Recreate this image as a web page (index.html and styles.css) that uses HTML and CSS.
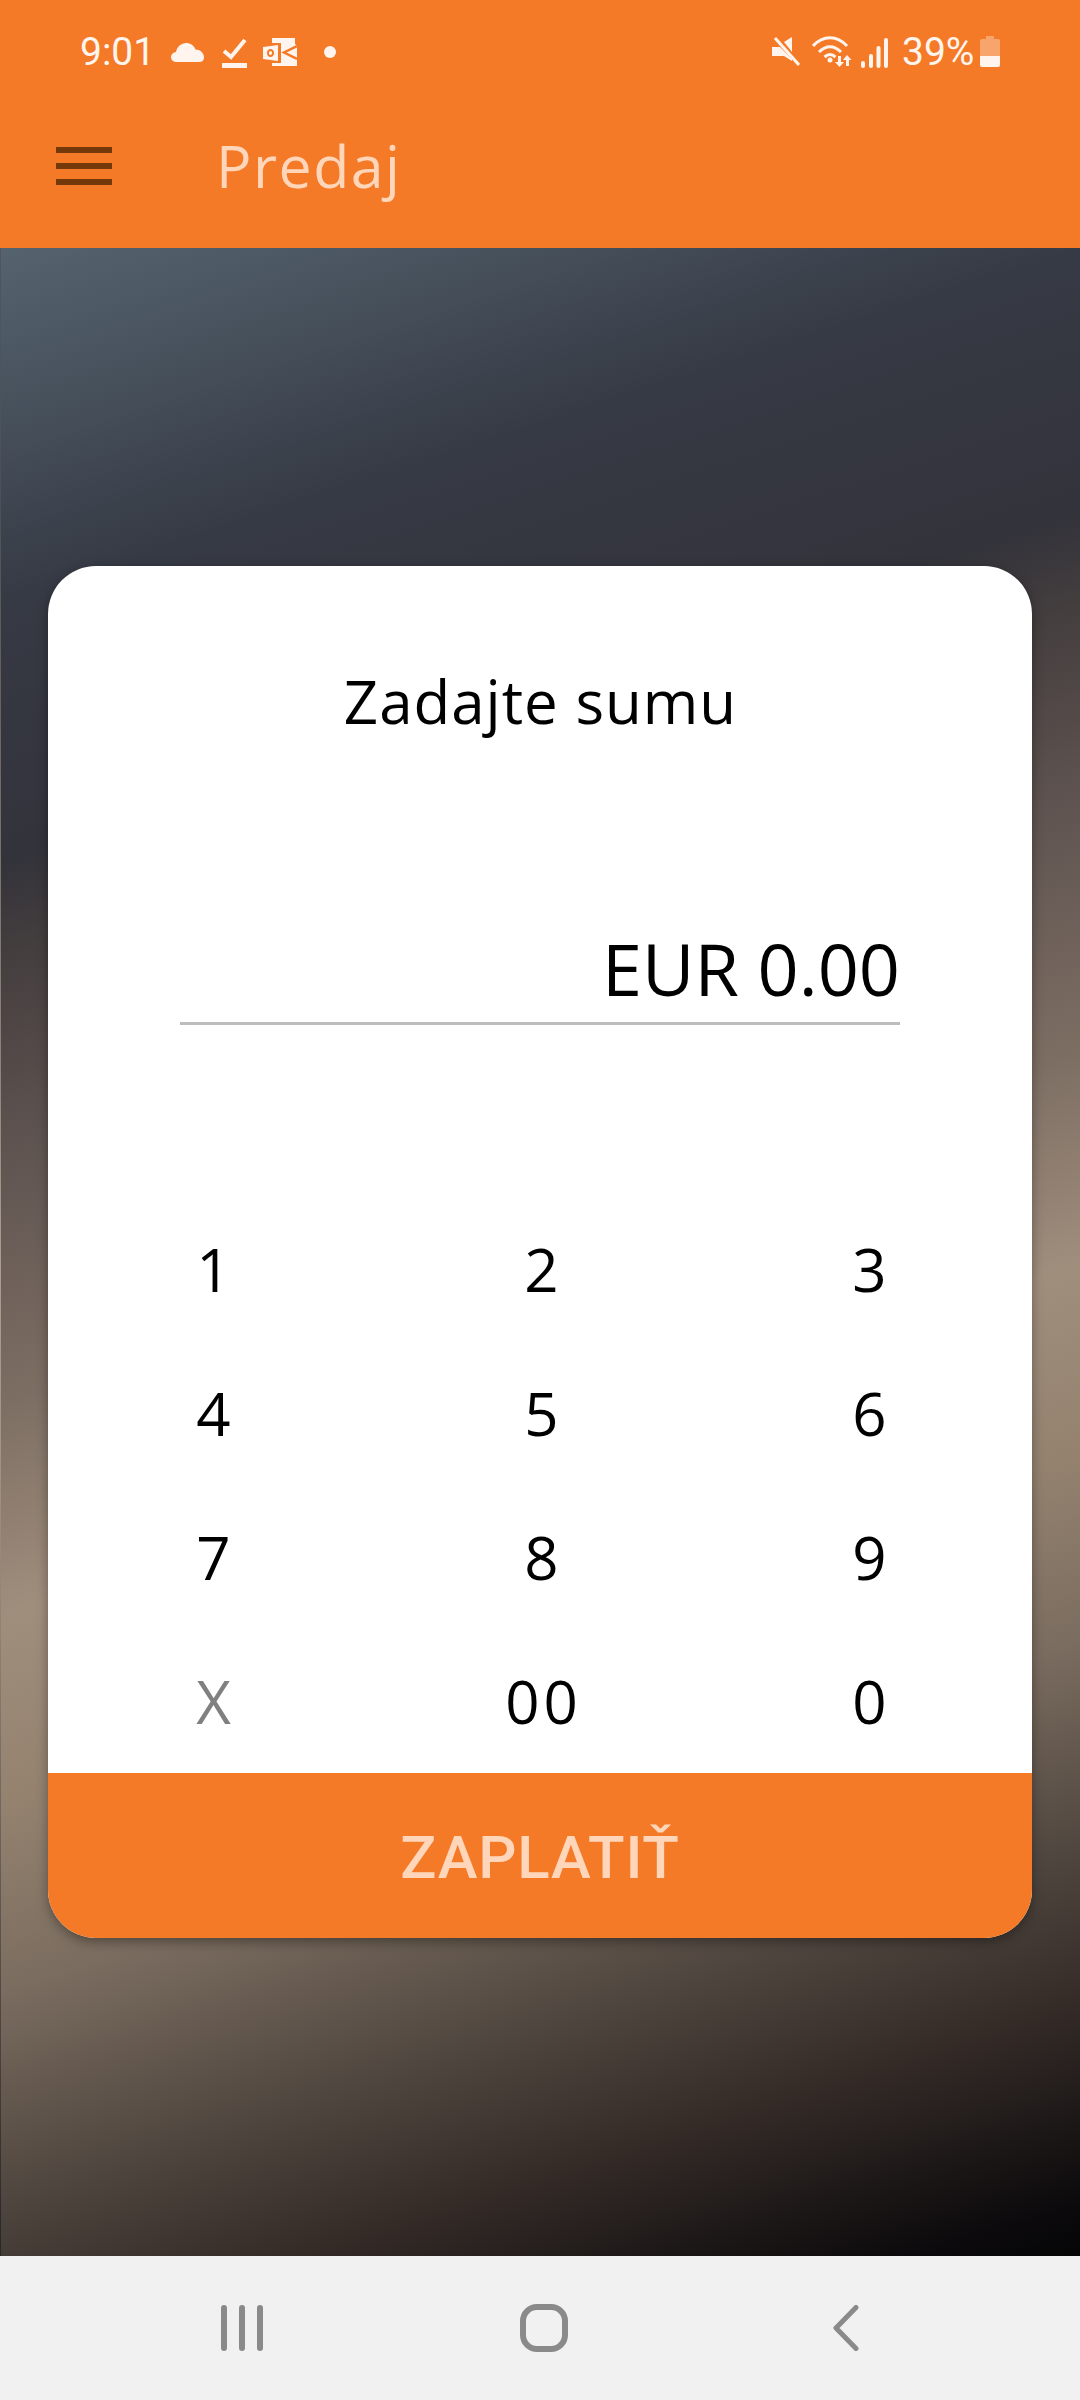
FILE: index.html
```html
<!DOCTYPE html>
<html lang="sk">
<head>
<meta charset="utf-8">
<title>Predaj</title>
<link rel="stylesheet" href="styles.css">
</head>
<body>
<div class="screen">
  <header class="appbar">
    <div class="status">
      <span class="time">9:01</span>
      <svg class="i-cloud" viewBox="0 0 33 19"><path d="M6 19C2.500 19 0 17 0 14c0-2.600 2-4.600 5-5C6 3.500 10.500 0 15 0c4.500 0 8 2.500 9.500 6.500 4.500 0 8.500 3.500 8.500 8 0 3-2 4.500-5 4.500z"/></svg>
      <svg class="i-check" viewBox="0 0 25 30"><path class="sq" d="M2 13l7 6L23 2" fill="none" stroke-width="4"/><rect y="25" width="25" height="5"/></svg>
      <svg class="i-outlook" viewBox="0 0 34 28"><path d="M9 0h23v6l2 2v20H9v-3h9V5H9z"/><path class="notch" d="M34 8l-13 6.500L34 21" fill="none" stroke-width="2.500"/><path fill-rule="evenodd" d="M0 9l15-2v16L0 21zM4 15c0 2.500 1.500 4 3.500 4s3.500-1.500 3.500-4-1.500-4-3.500-4S4 12.500 4 15zM6 15c0-1.300.6-2 1.500-2S9 13.700 9 15s-.6 2-1.500 2S6 16.300 6 15z"/></svg>
      <span class="dot"></span>
      <span class="spacer"></span>
      <svg class="i-mute" viewBox="0 0 28 30"><path d="M0 10h6l2 0 12 12v2L12 19H0zM12 5l8-5v15z"/><path class="sq" d="M3 1l24 27" fill="none" stroke-width="3"/></svg>
      <svg class="i-wifi" viewBox="0 0 43 32"><g fill="none" stroke-width="3"><path d="M1 11C11 0 25 0 35 11"/><path d="M7 17c7-7 15-7 22 0"/><path d="M12.500 22c4-3.500 7-3.500 11 0"/></g><circle cx="18" cy="25" r="2.500"/><path d="M26 21h3v6h3l-4.500 5-4.500-5h3zM35 20l4.500 5H37v6h-3v-6h-3z"/></svg>
      <svg class="i-signal" viewBox="0 0 27 30"><rect x="0" y="23" width="4" height="7" rx="2"/><rect x="8" y="16" width="4" height="14" rx="2"/><rect x="15.500" y="8" width="4" height="22" rx="2"/><rect x="23" y="0" width="4" height="30" rx="2"/></svg>
      <span class="pct">39%</span>
      <svg class="i-batt" viewBox="0 0 20 31"><path class="batt-empty" d="M6 0h8v3h4a2 2 0 0 1 2 2v15H0V5a2 2 0 0 1 2-2h4z"/><path d="M0 20h20v9a2 2 0 0 1-2 2H2a2 2 0 0 1-2-2z"/></svg>
    </div>
    <div class="toolbar">
      <div class="burger"><i></i><i></i><i></i></div>
      <h1 class="title">Predaj</h1>
    </div>
  </header>

  <main class="stage">
    <section class="card">
      <h2 class="prompt">Zadajte sumu</h2>
      <div class="amount">EUR 0.00</div>
      <div class="keypad">
        <button class="key">1</button>
        <button class="key">2</button>
        <button class="key">3</button>
        <button class="key">4</button>
        <button class="key">5</button>
        <button class="key">6</button>
        <button class="key">7</button>
        <button class="key">8</button>
        <button class="key">9</button>
        <button class="key key-muted">X</button>
        <button class="key">00</button>
        <button class="key">0</button>
      </div>
      <button class="pay">ZAPLATIŤ</button>
    </section>
  </main>

  <nav class="navbar">
    <svg class="n-recent" viewBox="0 0 42 46"><rect x="0" y="0" width="6" height="46" rx="3"/><rect x="18" y="0" width="6" height="46" rx="3"/><rect x="36" y="0" width="6" height="46" rx="3"/></svg>
    <svg class="n-home" viewBox="0 0 48 48"><rect x="3" y="3" width="42" height="42" rx="14" fill="none" stroke-width="6"/></svg>
    <svg class="n-back" viewBox="0 0 26 46"><path d="M23 2.500L3 23l20 20.500" fill="none" stroke-width="5" stroke-linecap="round" stroke-linejoin="round"/></svg>
  </nav>
</div>
</body>
</html>
```
FILE: styles.css
```css
* { box-sizing: border-box; }
html, body { margin: 0; padding: 0; }
body { width: 1080px; height: 2400px; overflow: hidden; font-family: "Open Sans", "Noto Sans", sans-serif; }
.screen { width: 1080px; height: 2400px; display: flex; flex-direction: column; }

.appbar { height: 248px; background: #f57a28; flex: none; display: flex; flex-direction: column; }
.status { height: 100px; padding: 5px 80px 0; display: flex; align-items: center; color: #fff5ee; fill: #fff5ee; stroke: #fff5ee; }
.status svg { display: block; flex: none; stroke: none; }
.status .sq { stroke: #fff5ee; }
.status .notch { stroke: #f57a28; }
.status .i-wifi g { stroke: #fff5ee; }
.time { font: 400 39px/1 Roboto, sans-serif; width: 66px; }
.i-cloud { width: 33px; height: 19px; margin-left: 25px; margin-top: 0; }
.i-check { width: 25px; height: 30px; margin-left: 18px; margin-top: 0; }
.i-outlook { width: 34px; height: 28px; margin-left: 16px; margin-top: -2px; }
.dot { width: 12px; height: 12px; border-radius: 50%; background: #fff5ee; margin-left: 27px; margin-top: -2px; }
.spacer { flex: 1; }
.i-mute { width: 28px; height: 30px; margin-top: -2px; }
.i-wifi { width: 43px; height: 32px; margin-left: 12px; margin-top: -4px; }
.i-signal { width: 27px; height: 30px; margin-left: 6px; margin-top: 0; }
.pct { font: 400 39px/1 Roboto, sans-serif; margin-left: 14px; width: 71px; }
.i-batt { width: 20px; height: 31px; margin-left: 7px; margin-top: -3px; }
.batt-empty { opacity: .35; }

.toolbar { flex: 1; display: flex; align-items: center; padding-left: 56px; padding-bottom: 16px; }
.burger { width: 56px; height: 38px; display: flex; flex-direction: column; justify-content: space-between; }
.burger i { display: block; height: 6px; background: #73390a; }
.title { margin: -3px 0 0 104px; font-weight: 400; font-size: 59px; line-height: 80px; letter-spacing: 1.500px; color: #ffd6ba; }

.stage { flex: 1; min-height: 0; display: flex; align-items: center; padding: 0 48px 0 47px; border-left: 1px solid rgba(255,255,255,.14);
  background: linear-gradient(162deg, #55636f 0%, #46505b 7.400%, #363a44 15%, #33333b 26%, #443e3e 30%, #5e5350 38%, #7d6e63 49%, #a08e7d 58%, #94826f 66%, #7a6c5f 74%, #4e453e 83%, #352c28 89%, #0c0a0c 97.700%, #050506 100%); }
.card { width: 984px; height: 1372px; background: #fff; border-radius: 48px; overflow: hidden; display: flex; flex-direction: column;
  box-shadow: 0 4px 12px rgba(0,0,0,.35); }
.prompt { flex: none; margin: 0; padding: 98px 0 0 1px; font-weight: 400; font-size: 60px; line-height: 74px; text-align: center; color: #000; letter-spacing: 1px; }
.amount { flex: none; margin: 175px 132px 0; height: 112px; border-bottom: 3px solid #bdbdbd; text-align: right; padding: 18px 0 0 0;
  font-size: 72px; line-height: 74px; color: #000; }
.keypad { flex: none; margin-top: 172px; display: grid; grid-template-columns: repeat(3, 328px); grid-auto-rows: 144px; }
.key { appearance: none; border: 0; background: none; padding: 0 0 0 7px; font: 400 60px/1 "Open Sans", sans-serif; letter-spacing: 4px; color: #000; text-align: center; }
.key-muted { color: #808080; }
.pay { appearance: none; border: 0; margin: 0; padding: 5px 0 0; height: 165px; flex: none; background: #f57a28; color: #ffd6ba;
  font: 500 60px/1 Roboto, sans-serif; letter-spacing: .8px; text-align: center; }

.navbar { height: 144px; flex: none; background: #f1f1f2; display: flex; align-items: center; padding-left: 221px; fill: #8a8a8a; stroke: none; }
.navbar svg { display: block; flex: none; }
.n-recent { width: 42px; height: 46px; }
.n-home { width: 48px; height: 48px; margin-left: 257px; stroke: #8a8a8a; }
.n-back { width: 26px; height: 46px; margin-left: 265px; stroke: #8a8a8a; }
```
